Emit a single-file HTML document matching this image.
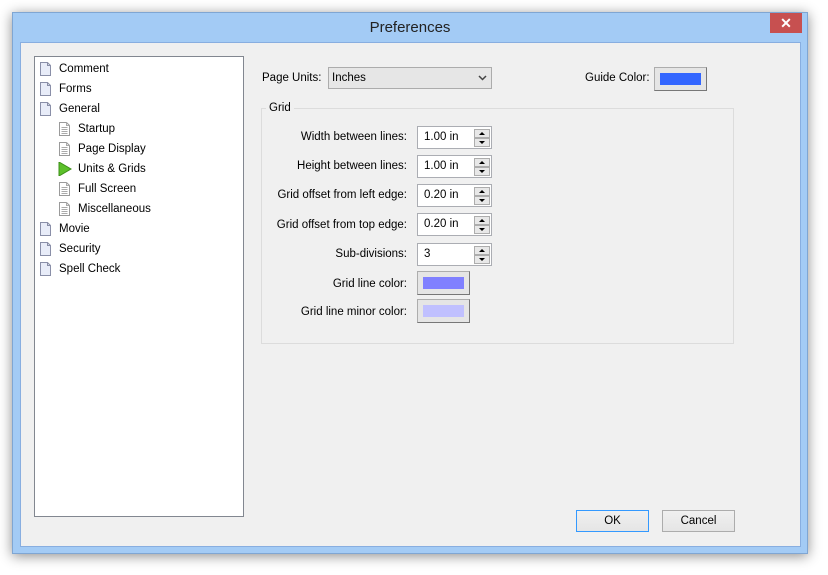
<!DOCTYPE html>
<html><head><style>
*{margin:0;padding:0;box-sizing:border-box}
body{width:828px;height:575px;background:#fff;position:relative;overflow:hidden;font-family:"Liberation Sans",sans-serif;font-size:11.5px;color:#000}
.a{position:absolute}
.frame{left:12px;top:12px;width:796px;height:542px;background:#a3cbf5;border:1px solid #7fa6d3;box-shadow:0 2px 12px rgba(0,0,0,.45)}
.content{left:20px;top:42px;width:781px;height:505px;background:#f0f0f0;border:1px solid #88aee0}
.title{left:12px;top:19px;width:796px;text-align:center;font-size:15px;color:#222}
.close{left:770px;top:13px;width:32px;height:20px;background:#c75050;color:#fff;text-align:center;font-size:14px;line-height:20px;font-weight:bold}
.tree{left:34px;top:56px;width:210px;height:461px;background:#fff;border:1px solid #828790}
.it{position:absolute;height:18px;line-height:16px}
.doc{position:absolute;width:11px;height:14px;top:1px;left:-19px}
.lbl{position:absolute;text-align:right;width:180px}
.spin{position:absolute;left:417px;width:75px;height:23px;background:#fff;border:1px solid #abadb3;padding:4px 0 0 6px}
.sb{position:absolute;right:1px;width:16px;height:9px;border:1px solid #adadad;background:#e8e8e8}
.sb.u{top:2px}.sb.d{top:11px}
.sb:after{content:"";position:absolute;left:4px;border-left:3px solid transparent;border-right:3px solid transparent}
.sb.u:after{top:2px;border-bottom:3px solid #000}
.sb.d:after{top:2px;border-top:3px solid #000}
.cbtn{position:absolute;width:53px;height:24px;background:#e5e5e5;border:1px solid #adadad;border-right-color:#777;border-bottom-color:#777}
.cbtn i{position:absolute;left:5px;top:5px;width:41px;height:12px}
.btn{position:absolute;height:22px;background:linear-gradient(#f0f0f0,#e5e5e5);border:1px solid #acacac;text-align:center;line-height:20px}
</style></head><body>
<div class="a frame"></div>
<div class="a title">Preferences</div>
<div class="a close">✕</div>
<div class="a content"></div>
<div class="a tree">
<svg width="0" height="0" style="position:absolute"><defs>
<g id="pg"><path d="M0.5 0.5H7.5L10.5 3.5V13.5H0.5Z" fill="#e8ecf8" stroke="#8a8fa8"/><path d="M7.5 0.5V3.5H10.5" fill="none" stroke="#8a8fa8"/></g>
<g id="pl"><path d="M0.5 0.5H7.5L10.5 3.5V13.5H0.5Z" fill="#fff" stroke="#9a9a9a"/><path d="M7.5 0.5V3.5H10.5M2.5 5.5H8.5M2.5 7.5H8.5M2.5 9.5H8.5M2.5 11.5H8.5" fill="none" stroke="#aaa"/></g>
</defs></svg>
<div class="it" style="left:24px;top:4px"><svg class="doc"><use href="#pg"/></svg>Comment</div>
<div class="it" style="left:24px;top:24px"><svg class="doc"><use href="#pg"/></svg>Forms</div>
<div class="it" style="left:24px;top:44px"><svg class="doc"><use href="#pg"/></svg>General</div>
<div class="it" style="left:43px;top:64px"><svg class="doc"><use href="#pl"/></svg>Startup</div>
<div class="it" style="left:43px;top:84px"><svg class="doc"><use href="#pl"/></svg>Page Display</div>
<div class="it" style="left:43px;top:104px"><svg class="doc" style="width:14px;left:-20px"><path d="M1 0L13 7L1 14Z" fill="#5cc02a" stroke="#3d8f1a"/></svg>Units &amp; Grids</div>
<div class="it" style="left:43px;top:124px"><svg class="doc"><use href="#pl"/></svg>Full Screen</div>
<div class="it" style="left:43px;top:144px"><svg class="doc"><use href="#pl"/></svg>Miscellaneous</div>
<div class="it" style="left:24px;top:164px"><svg class="doc"><use href="#pg"/></svg>Movie</div>
<div class="it" style="left:24px;top:184px"><svg class="doc"><use href="#pg"/></svg>Security</div>
<div class="it" style="left:24px;top:204px"><svg class="doc"><use href="#pg"/></svg>Spell Check</div>
</div>

<div class="a" style="left:262px;top:72px">Page Units:</div>
<div class="a" style="left:328px;top:67px;width:164px;height:22px;background:#e6e6e6;border:1px solid #acacac;padding:4px 0 0 3px">Inches
<svg class="a" style="right:4px;top:7px" width="9" height="6"><path d="M1 1L4.5 4.5L8 1" fill="none" stroke="#444" stroke-width="1.5"/></svg></div>
<div class="a" style="left:585px;top:72px">Guide Color:</div>
<div class="cbtn" style="left:654px;top:67px"><i style="background:#3366ff"></i></div>

<div class="a" style="left:261px;top:108px;width:473px;height:236px;border:1px solid #dcdcdc"></div>
<div class="a" style="left:266px;top:102px;background:#f0f0f0;padding:0 3px">Grid</div>

<div class="lbl" style="left:227px;top:131px">Width between lines:</div>
<div class="spin" style="top:126px">1.00 in<div class="sb u"></div><div class="sb d"></div></div>
<div class="lbl" style="left:227px;top:160px">Height between lines:</div>
<div class="spin" style="top:155px">1.00 in<div class="sb u"></div><div class="sb d"></div></div>
<div class="lbl" style="left:227px;top:189px">Grid offset from left edge:</div>
<div class="spin" style="top:184px">0.20 in<div class="sb u"></div><div class="sb d"></div></div>
<div class="lbl" style="left:227px;top:219px">Grid offset from top edge:</div>
<div class="spin" style="top:213px">0.20 in<div class="sb u"></div><div class="sb d"></div></div>
<div class="lbl" style="left:227px;top:248px">Sub-divisions:</div>
<div class="spin" style="top:243px">3<div class="sb u"></div><div class="sb d"></div></div>
<div class="lbl" style="left:227px;top:278px">Grid line color:</div>
<div class="cbtn" style="left:417px;top:271px"><i style="background:#8080ff"></i></div>
<div class="lbl" style="left:227px;top:306px">Grid line minor color:</div>
<div class="cbtn" style="left:417px;top:299px"><i style="background:#c0c0ff"></i></div>

<div class="btn" style="left:576px;top:510px;width:73px;border-color:#3399ff">OK</div>
<div class="btn" style="left:662px;top:510px;width:73px">Cancel</div>
</body></html>
